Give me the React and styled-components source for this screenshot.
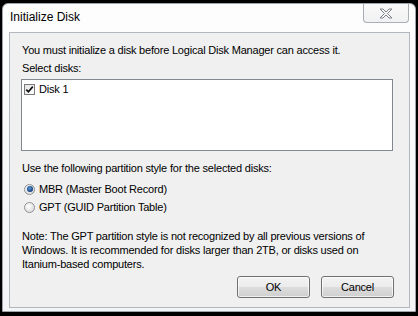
import React from "react";
import styled, { createGlobalStyle } from "styled-components";

const Global = createGlobalStyle`
  html, body { margin: 0; padding: 0; background: #000; }
  body { width: 418px; height: 316px; overflow: hidden; }
  * { box-sizing: border-box; }
`;

const Window = styled.div`
  margin: 3px 0 0 2px;
  width: 414px;
  height: 309px;
  border: 1px solid #9ea4ab;
  border-radius: 6px 6px 0 0;
  background: linear-gradient(#fdfdfd, #f3f4f5);
  display: flex;
  flex-direction: column;
  font-family: "Liberation Sans", Arial, sans-serif;
  color: #000;
`;

const TitleBar = styled.div`
  height: 28px;
  display: flex;
  align-items: center;
  padding: 0 6px 0 7px;
`;

const Title = styled.div`
  font-size: 12px;
  padding-bottom: 2px;
`;

const CloseButton = styled.div`
  margin-left: auto;
  align-self: flex-start;
  width: 46px;
  height: 19px;
  border: 1px solid #a9aeb4;
  border-top: none;
  border-radius: 0 0 4px 4px;
  background: linear-gradient(#fafafa, #f0f1f2);
  display: flex;
  align-items: center;
  justify-content: center;
`;

const Body = styled.div`
  padding: 0 5px 3px 6px;
  flex: 1;
  display: flex;
`;

const Panel = styled.div`
  width: 401px;
  height: 276px;
  border: 1px solid #b3b8be;
  background: #f0f0f0;
  padding: 10px 15px 0 11px;
  display: flex;
  flex-direction: column;
  font-size: 11px;
  letter-spacing: -0.2px;
  line-height: 14px;
`;

const Label = styled.div`
  padding-left: 1px;
  margin-top: ${(p) => p.$mt || 0}px;
  white-space: ${(p) => (p.$wrap ? "normal" : "nowrap")};
`;

const ListBox = styled.div`
  margin-top: 4px;
  width: 372px;
  height: 72px;
  border: 1px solid #828790;
  background: #fff;
  padding: 2px 2px;
`;

const ListItem = styled.div`
  display: flex;
  align-items: center;
  gap: 4px;
  height: 14px;
`;

const Box = styled.div`
  width: 11px;
  height: 11px;
  border: 1px solid #7a7a7a;
  background: linear-gradient(135deg, #e4e4e4, #ffffff);
  display: flex;
  align-items: center;
  justify-content: center;
`;

const RadioGroup = styled.div`
  margin-top: 7px;
  display: flex;
  flex-direction: column;
  gap: 4px;
`;

const RadioRow = styled.div`
  display: flex;
  align-items: center;
  gap: 4px;
  height: 14px;
  padding-left: 3px;
`;

const RadioCircle = styled.div`
  width: 11px;
  height: 11px;
  border-radius: 50%;
  border: 1px solid #8f9295;
  background: radial-gradient(circle at 40% 35%, #ffffff, #dcdcdc 80%);
  display: flex;
  align-items: center;
  justify-content: center;
  &::after {
    content: "";
    display: ${(p) => (p.$on ? "block" : "none")};
    width: 6px;
    height: 6px;
    border-radius: 50%;
    background: radial-gradient(circle at 45% 40%, #5f9ad9, #1b4b87 60%, #0e2c5c);
    box-shadow: 0 0 1px #8ab4e0;
  }
`;

const Note = styled.div`
  margin-top: 15px;
  padding-left: 1px;
  width: 370px;
`;

const ButtonRow = styled.div`
  margin-top: 5px;
  display: flex;
  justify-content: flex-end;
  gap: 11px;
`;

const Button = styled.div`
  width: 73px;
  height: 22px;
  border: 1px solid #707070;
  border-radius: 3px;
  background: linear-gradient(#f3f3f3 0%, #ebebeb 49%, #dddddd 51%, #cfcfcf 100%);
  box-shadow: inset 0 0 0 1px rgba(255, 255, 255, 0.7);
  display: flex;
  align-items: center;
  justify-content: center;
  font-size: 11px;
`;

export default function App() {
  return (
    <>
      <Global />
      <Window>
        <TitleBar>
          <Title>Initialize Disk</Title>
          <CloseButton>
            <svg width="14" height="11" viewBox="0 0 14 11">
              <polygon
                points="1,1 4,1 7,4 10,1 13,1 8.5,5.5 13,10 10,10 7,7 4,10 1,10 5.5,5.5"
                fill="#f6f6f6"
                stroke="#80858b"
                strokeWidth="1"
                strokeLinejoin="round"
              />
            </svg>
          </CloseButton>
        </TitleBar>
        <Body>
          <Panel>
            <Label>You must initialize a disk before Logical Disk Manager can access it.</Label>
            <Label $mt={4}>Select disks:</Label>
            <ListBox>
              <ListItem>
                <Box>
                  <svg width="9" height="9" viewBox="0 0 9 9">
                    <path d="M1.3 4.6 L3.4 6.8 L7.8 1.6" fill="none" stroke="#111" strokeWidth="1.7" />
                  </svg>
                </Box>
                <span>Disk 1</span>
              </ListItem>
            </ListBox>
            <Label $mt={10}>Use the following partition style for the selected disks:</Label>
            <RadioGroup>
              <RadioRow>
                <RadioCircle $on />
                <span>MBR (Master Boot Record)</span>
              </RadioRow>
              <RadioRow>
                <RadioCircle />
                <span>GPT (GUID Partition Table)</span>
              </RadioRow>
            </RadioGroup>
            <Note>
              Note: The GPT partition style is not recognized by all previous versions of
              Windows. It is recommended for disks larger than 2TB, or disks used on
              Itanium-based computers.
            </Note>
            <ButtonRow>
              <Button>OK</Button>
              <Button>Cancel</Button>
            </ButtonRow>
          </Panel>
        </Body>
      </Window>
    </>
  );
}
